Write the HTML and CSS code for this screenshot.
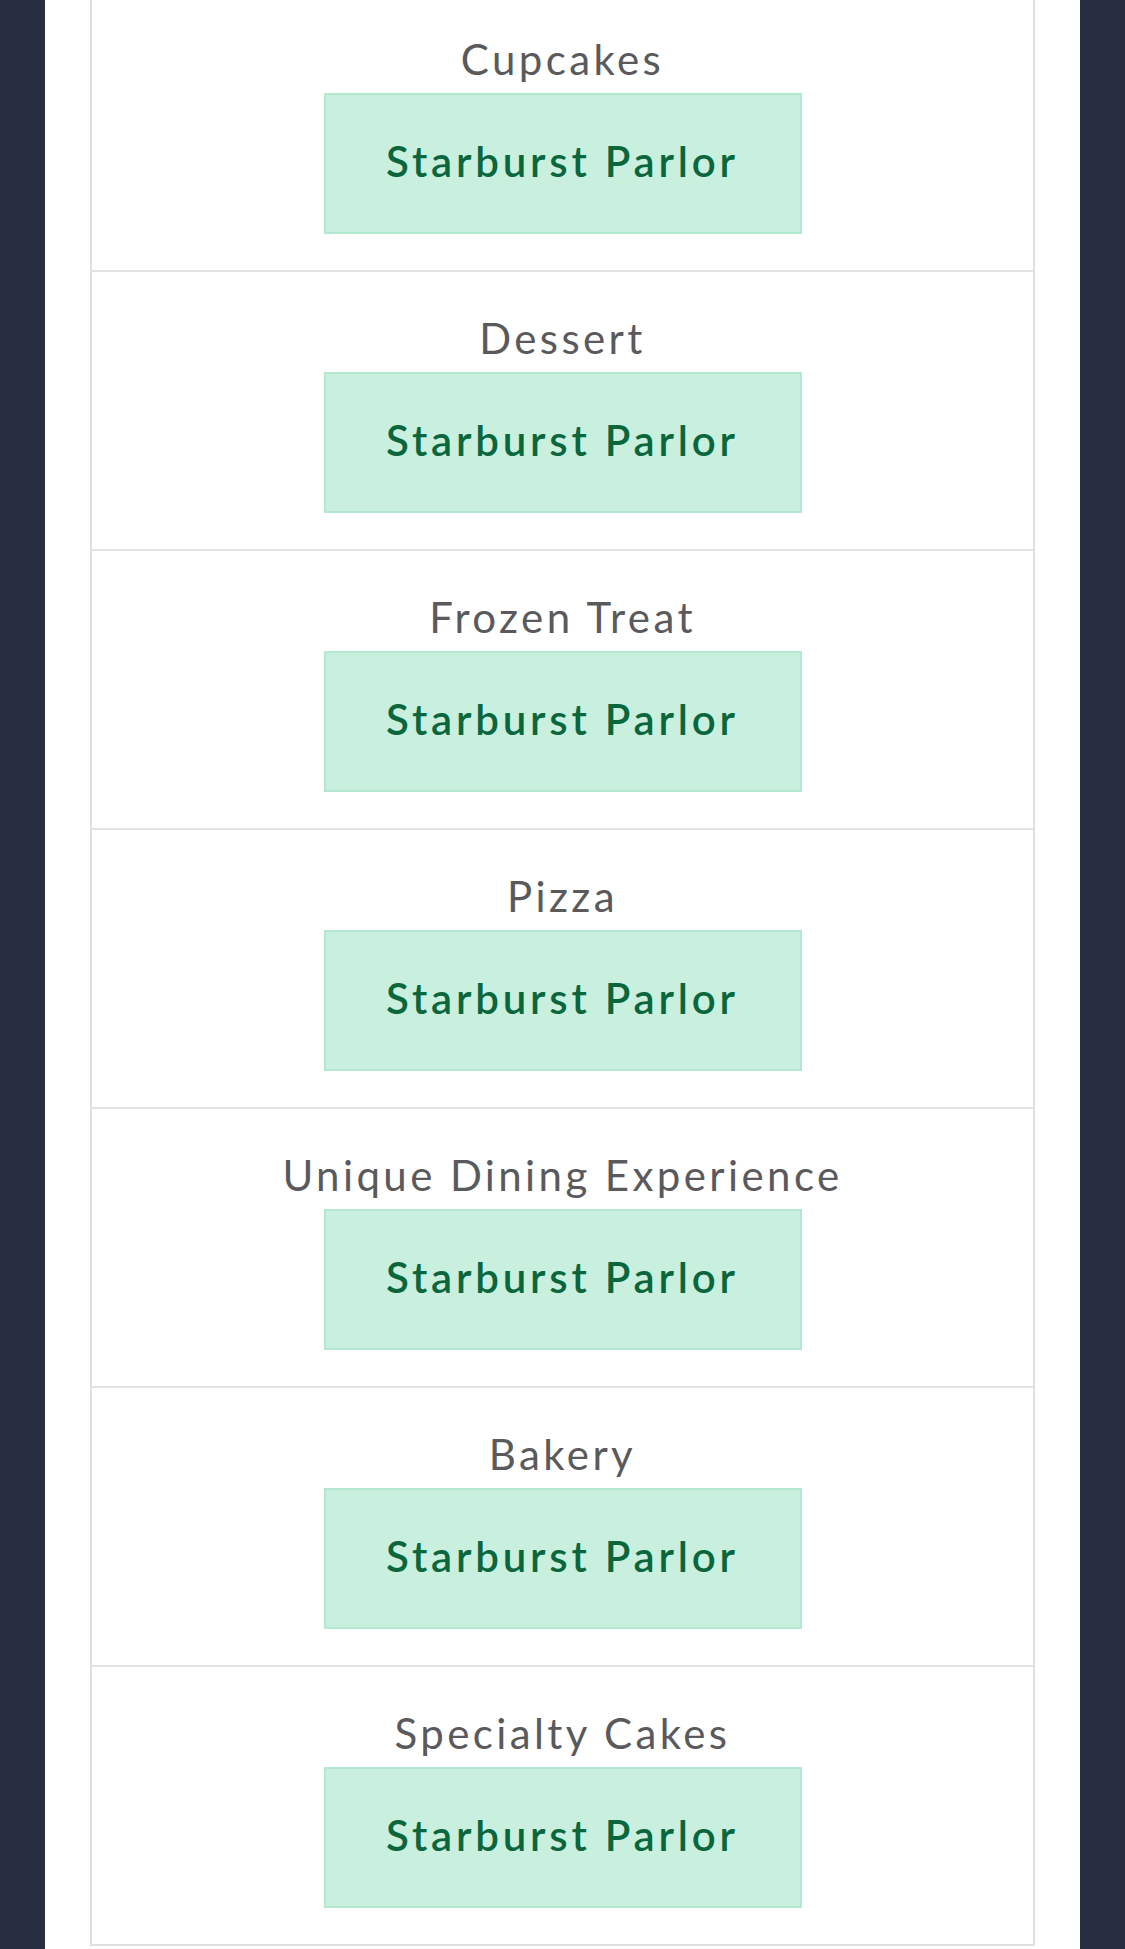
FILE: index.html
```html
<!DOCTYPE html>
<html lang="en">
<head>
<meta charset="utf-8">
<title>Categories</title>
<link rel="stylesheet" href="styles.css">
</head>
<body>
<div class="page">
  <main class="column">
    <ul class="list">
      <li class="row"><span class="label">Cupcakes</span><a class="btn" href="#">Starburst Parlor</a></li>
      <li class="row"><span class="label">Dessert</span><a class="btn" href="#">Starburst Parlor</a></li>
      <li class="row"><span class="label">Frozen Treat</span><a class="btn" href="#">Starburst Parlor</a></li>
      <li class="row"><span class="label">Pizza</span><a class="btn" href="#">Starburst Parlor</a></li>
      <li class="row"><span class="label">Unique Dining Experience</span><a class="btn" href="#">Starburst Parlor</a></li>
      <li class="row"><span class="label">Bakery</span><a class="btn" href="#">Starburst Parlor</a></li>
      <li class="row"><span class="label">Specialty Cakes</span><a class="btn" href="#">Starburst Parlor</a></li>
    </ul>
  </main>
</div>
</body>
</html>
```
FILE: styles.css
```css
html, body {
  margin: 0;
  padding: 0;
}
body {
  background: #272e41;
  font-family: Lato, "Noto Sans", sans-serif;
  height: 1949px;
  overflow: hidden;
}
.page {
  display: flex;
  justify-content: center;
  padding: 0 45px;
}
.column {
  flex: 1;
  background: #ffffff;
  padding: 0 45px;
  min-height: 1949px;
}
.list {
  list-style: none;
  margin: -9px 0 0 0;
  padding: 0;
  border: 2px solid #e0e0e0;
}
.row {
  display: flex;
  flex-direction: column;
  align-items: center;
  padding: 41px 0 36px;
  border-bottom: 2px solid #e2e2e2;
}
.row:last-child {
  border-bottom: none;
}
.label {
  display: block;
  font-size: 42px;
  line-height: 50px;
  color: #5a5a5c;
  letter-spacing: 3.4px;
  font-weight: 400;
}
.btn {
  margin-top: 9px;
  box-sizing: border-box;
  width: 478px;
  height: 141px;
  padding-bottom: 5px;
  display: flex;
  align-items: center;
  justify-content: center;
  background: #c9f0df;
  border: 2px solid #b4e7d0;
  color: #0a663c;
  font-size: 42px;
  font-weight: 600;
  letter-spacing: 3.8px;
  text-decoration: none;
}
```
